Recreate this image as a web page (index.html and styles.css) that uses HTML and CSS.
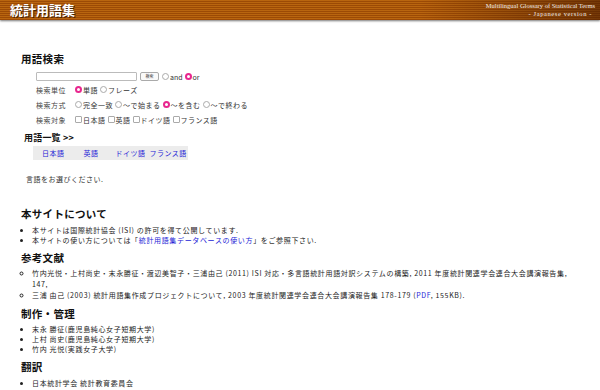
FILE: index.html
```html
<!doctype html>
<html>
<head>
    <meta charset="UTF-8">
    <title>統計用語集</title>
    <link rel="stylesheet" href="styles.css">
</head>
<body>
    <div class="header">
        <h1 class="logo">統計用語集</h1>
        <div class="subtitle">
            <div>Multilingual Glossary of Statistical Terms</div>
            <div class="version">- Japanese version -</div>
        </div>
    </div>

    <div class="content">
        <h2>用語検索</h2>
        <div class="search-line">
            <span class="text-box"></span>
            <span class="button">検索</span>
            <span class="radio"></span><span class="opt">and</span>
            <span class="radio on"></span><span class="opt">or</span>
        </div>
        <div class="option-row">
            <span class="label">検索単位</span>
            <span class="radio on"></span><span class="opt">単語</span>
            <span class="radio"></span><span class="opt">フレーズ</span>
        </div>
        <div class="option-row">
            <span class="label">検索方式</span>
            <span class="radio"></span><span class="opt">完全一致</span>
            <span class="radio"></span><span class="opt">〜で始まる</span>
            <span class="radio on"></span><span class="opt">〜を含む</span>
            <span class="radio"></span><span class="opt">〜で終わる</span>
        </div>
        <div class="option-row">
            <span class="label">検索対象</span>
            <span class="check"></span><span class="opt">日本語</span>
            <span class="check"></span><span class="opt">英語</span>
            <span class="check"></span><span class="opt">ドイツ語</span>
            <span class="check"></span><span class="opt">フランス語</span>
        </div>

        <h3>用語一覧 &gt;&gt;</h3>
        <div class="lang-bar">
            <a href="#" class="lang-ja">日本語</a>
            <a href="#" class="lang-en">英語</a>
            <a href="#" class="lang-de">ドイツ語</a>
            <a href="#" class="lang-fr">フランス語</a>
        </div>
        <p class="hint">言語をお選びください.</p>

        <h2 class="about">本サイトについて</h2>
        <ul>
            <li>本サイトは国際統計協会 (ISI) の許可を得て公開しています.</li>
            <li>本サイトの使い方については「<a href="#">統計用語集データベースの使い方</a>」をご参照下さい.</li>
        </ul>

        <h2>参考文献</h2>
        <ul class="refs">
            <li>竹内光悦・上村尚史・末永勝征・渡辺美智子・三浦由己 (2011) ISI 対応・多言語統計用語対訳システムの構築, 2011 年度統計関連学会連合大会講演報告集, 147,</li>
            <li>三浦 由己 (2003) 統計用語集作成プロジェクトについて, 2003 年度統計関連学会連合大会講演報告集 178-179 (<a href="#">PDF</a>, 155KB).</li>
        </ul>

        <h2>制作・管理</h2>
        <ul>
            <li>末永 勝征(鹿児島純心女子短期大学)</li>
            <li>上村 尚史(鹿児島純心女子短期大学)</li>
            <li>竹内 光悦(実践女子大学)</li>
        </ul>

        <h2>翻訳</h2>
        <ul class="last">
            <li>日本統計学会 統計教育委員会</li>
        </ul>
    </div>
</body>
</html>
```

FILE: styles.css
```css
body {
    margin: 0;
    font-family: "Noto Sans CJK JP", "Noto Sans", sans-serif;
    font-size: 7px;
    letter-spacing: 0.5px;
    color: #222;
    background-color: #fff;
}
a {
    color: #2424d6;
    text-decoration: none;
}

/* ヘッダー：横縞の茶色い帯 */
.header {
    height: 20px;
    display: flex;
    justify-content: space-between;
    align-items: center;
    padding: 0 5px 0 10px;
    background:
        linear-gradient(to right, rgba(60, 20, 0, 0) 70%, rgba(60, 20, 0, 0.55) 100%),
        repeating-linear-gradient(to bottom, #b9650f 0px, #b9650f 1px, #9c4a05 1px, #9c4a05 2px);
    box-shadow: 0 1px 2px #777;
}
.logo {
    margin: 0;
    font-size: 13px;
    line-height: 20px;
    font-weight: bold;
    letter-spacing: 0;
    color: #fff;
    text-shadow: 1px 1px 0 #4a2000;
}
.subtitle {
    font-family: "Liberation Serif", serif;
    font-size: 6.5px;
    line-height: 8px;
    letter-spacing: 0;
    color: #f4eee6;
    text-align: right;
}
.subtitle .version {
    letter-spacing: 0.6px;
    padding-right: 3px;
}

.content {
    width: 556px;
    padding: 32px 0 0 21px;
}
h2 {
    margin: 6px 0 0 0;
    font-size: 10.5px;
    line-height: 14px;
    font-weight: bold;
    letter-spacing: 0.3px;
    color: #111;
}
.content h2:first-child {
    margin-top: 0;
}

/* 検索フォーム */
.search-line,
.option-row {
    display: flex;
    align-items: center;
    margin-left: 15px;
    color: #333;
}
.search-line {
    height: 11px;
    margin-top: 5px;
    letter-spacing: 0;
}
.option-row {
    height: 15px;
}
.text-box {
    width: 99px;
    height: 7px;
    border: 1px solid #bbb;
    border-radius: 1px;
}
.button {
    width: 17px;
    height: 7px;
    margin: 0 3px;
    border: 1px solid #aaa;
    border-radius: 2px;
    font-size: 4px;
    line-height: 7px;
    text-align: center;
    background-color: #fafafa;
}
.label {
    width: 39px;
    color: #444;
}
.radio {
    width: 5px;
    height: 5px;
    margin-right: 1px;
    border: 1px solid #aaa;
    border-radius: 50%;
}
.radio.on {
    width: 3px;
    height: 3px;
    border: 2px solid #e8278f;
}
.check {
    width: 5px;
    height: 5px;
    margin-right: 1px;
    border: 1px solid #aaa;
    border-radius: 1px;
}
.opt {
    margin-right: 2px;
}

/* 用語一覧 */
h3 {
    margin: 5px 0 0 3px;
    font-size: 9px;
    line-height: 12px;
    font-weight: bold;
    letter-spacing: 0.2px;
    color: #111;
}
.lang-bar {
    display: flex;
    width: 155px;
    height: 14px;
    margin: 2px 0 0 12px;
    align-items: center;
    background-color: #ececec;
}
.lang-bar a {
    display: block;
    flex-shrink: 0;
    white-space: nowrap;
}
.lang-ja {
    margin-left: 9px;
}
.lang-en {
    margin-left: 19px;
}
.lang-de {
    margin-left: 17px;
}
.lang-fr {
    margin-left: 4px;
}
.hint {
    margin: 14px 0 0 5px;
    line-height: 10px;
    color: #333;
}
h2.about {
    margin-top: 23px;
}

/* 一覧の文字は少し広めに */
ul {
    margin: 3px 0 0 0;
    padding-left: 11px;
    line-height: 10px;
    letter-spacing: 0.65px;
}
.about + ul {
    margin-top: 4px;
}
ul.refs {
    line-height: 11px;
    list-style-type: circle;
}
ul.last {
    margin-top: 4px;
}
```
